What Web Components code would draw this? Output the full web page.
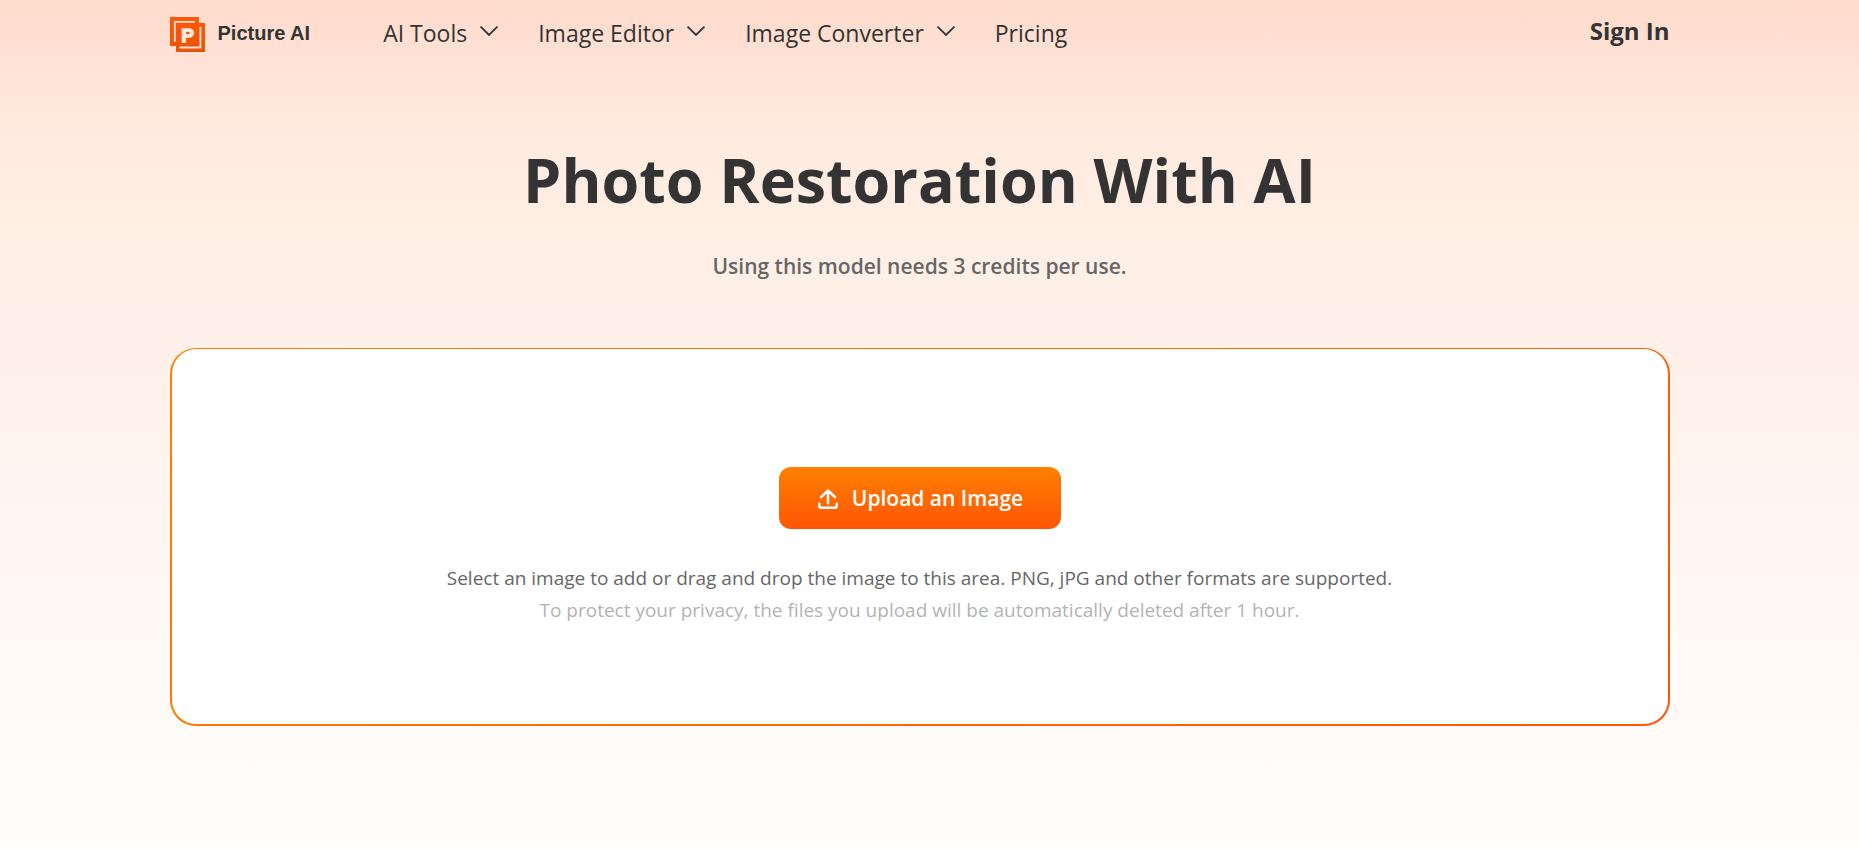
<!DOCTYPE html>
<html lang="en">
<head>
<meta charset="utf-8">
<meta name="viewport" content="width=device-width, initial-scale=1">
<title>Photo Restoration With AI - Picture AI</title>
<style>
  html { min-height: 100%; background: linear-gradient(180deg, #ffdbcb 0, #ffe3d6 68px, #ffebe0 140px, #fff0e7 270px, #fff2ec 410px, #fff8f5 600px, #fffdfc 820px, #fffefd 100%) no-repeat #fffefd; }
  body { margin: 0; font-family: "Open Sans", "Noto Sans", sans-serif; color: #333; }
</style>
</head>
<body>
<picture-app></picture-app>

<template id="app-tpl">
  <style>
    :host { display: block; width: min(1500px, calc(100% - 48px)); margin-left: max(24px, calc((100% - 1520px) / 2)); }
  </style>
  <site-header>
    <nav-item menu>AI Tools</nav-item>
    <nav-item menu>Image Editor</nav-item>
    <nav-item menu>Image Converter</nav-item>
    <nav-item>Pricing</nav-item>
  </site-header>
  <main>
    <page-hero>
      Photo Restoration With AI
      <span slot="note">Using this model needs 3 credits per use.</span>
    </page-hero>
    <upload-card>
      <upload-button>Upload an Image</upload-button>
      <span slot="hint">Select an image to add or drag and drop the image to this area. PNG, jPG and other formats are supported.</span>
      <span slot="privacy">To protect your privacy, the files you upload will be automatically deleted after 1 hour.</span>
    </upload-card>
  </main>
</template>

<template id="header-tpl">
  <style>
    :host { display: block; }
    header { display: flex; align-items: center; min-height: 66px; }
    nav { display: flex; flex-wrap: wrap; gap: 40px; margin-left: 73px; }
    .sign { margin-left: auto; padding-bottom: 4px; color: inherit; text-decoration: none; font-size: 24px; font-weight: 700; line-height: 32px; }
  </style>
  <header>
    <brand-logo>Picture AI</brand-logo>
    <nav aria-label="Main"><slot></slot></nav>
    <a class="sign" href="#signin">Sign In</a>
  </header>
</template>

<template id="brand-tpl">
  <style>
    :host { display: block; }
    a { display: flex; align-items: center; gap: 13px; color: inherit; text-decoration: none; font: 700 20px/32px "Liberation Sans", Arial, sans-serif; }
    svg { display: block; margin-top: 3px; }
  </style>
  <a href="#home">
    <svg width="35" height="35" viewBox="0 0 35 35" aria-hidden="true">
      <defs><linearGradient id="g" x1="0" y1="0" x2="0" y2="1"><stop offset="0" stop-color="#ff5a08"/><stop offset="1" stop-color="#e95308"/></linearGradient></defs>
      <path d="M0 0H29V6H35V35H6V29H0Z" fill="url(#g)"/>
      <path d="M4.8 24.8V4.8H25M9.5 30.5H30.4V10" fill="none" stroke="#ffe1d4" stroke-width="1.8"/>
      <text x="11.2" y="24.8" font-family="Liberation Sans, Arial, sans-serif" font-size="19" font-weight="700" fill="#ffe8dd" stroke="#ffe8dd" stroke-width="1.4">P</text>
    </svg>
    <slot></slot>
  </a>
</template>

<template id="nav-tpl">
  <style>
    :host { display: block; }
    a, button { display: flex; align-items: center; gap: 13px; margin: 0; padding: 0; border: 0; background: none; color: inherit; text-decoration: none; font: inherit; font-size: 23px; line-height: 32px; cursor: pointer; white-space: nowrap; }
    svg { display: block; margin-bottom: 5px; }
  </style>
</template>

<template id="hero-tpl">
  <style>
    :host { display: block; text-align: center; padding: 72px 0 66px; }
    h1 { margin: 0 0 28px; font-size: 61px; line-height: 84px; font-weight: 700; }
    p { margin: 0; font-size: 21px; line-height: 32px; font-weight: 600; color: #666; }
  </style>
  <h1><slot></slot></h1>
  <p><slot name="note"></slot></p>
</template>

<template id="card-tpl">
  <style>
    :host { display: block; }
    section { display: flex; flex-direction: column; align-items: center; padding: 118px 24px 98px; border: 2px solid transparent; border-top-width: 1px; border-radius: 26px; text-align: center;
      background: linear-gradient(#fff, #fff) padding-box, linear-gradient(135deg, #ff8000, #ff5505) border-box; }
    p { margin: 0; font-size: 19px; line-height: 32px; color: #666; }
    .hint { margin-top: 33px; }
    .privacy { color: #b3b3b3; }
  </style>
  <section aria-label="Upload">
    <slot></slot>
    <p class="hint"><slot name="hint"></slot></p>
    <p class="privacy"><slot name="privacy"></slot></p>
  </section>
</template>

<template id="button-tpl">
  <style>
    :host { display: block; }
    button { display: flex; align-items: center; justify-content: center; gap: 14px; min-width: 282px; height: 62px; padding: 0 36px 0 38px; border: 0; border-radius: 12px; background: linear-gradient(180deg, #ff8000, #ff5505); color: #fff; font: inherit; font-size: 21px; font-weight: 600; line-height: 32px; cursor: pointer; }
    svg { display: block; margin-top: 2px; }
  </style>
  <button type="button">
    <svg width="20" height="20" viewBox="0 0 20 20" fill="none" stroke="#fff" stroke-width="2.5" stroke-linecap="round" stroke-linejoin="round" aria-hidden="true">
      <path d="M10 14.2V1.8M3 8.2L10 1.5L17 8.2M1.3 14.8V17.6Q1.3 18.7 2.4 18.7H17.6Q18.7 18.7 18.7 17.6V14.8"/>
    </svg>
    <slot></slot>
  </button>
</template>

<script>
  class TemplateElement extends HTMLElement {
    constructor() {
      super();
      this.attachShadow({ mode: 'open' })
        .append(document.getElementById(this.constructor.template).content.cloneNode(true));
    }
  }
  class BrandLogo extends TemplateElement { static template = 'brand-tpl'; }
  class PageHero extends TemplateElement { static template = 'hero-tpl'; }
  class UploadButton extends TemplateElement { static template = 'button-tpl'; }
  class UploadCard extends TemplateElement { static template = 'card-tpl'; }
  class SiteHeader extends TemplateElement { static template = 'header-tpl'; }
  class PictureApp extends TemplateElement { static template = 'app-tpl'; }

  // A plain link, or a menu button with a chevron when the "menu" attribute is set.
  class NavItem extends TemplateElement {
    static template = 'nav-tpl';
    connectedCallback() {
      if (this.ready) return;
      this.ready = true;
      const menu = this.hasAttribute('menu');
      const control = document.createElement(menu ? 'button' : 'a');
      if (menu) {
        control.type = 'button';
        control.setAttribute('aria-haspopup', 'true');
      } else {
        control.href = '#pricing';
      }
      control.innerHTML = '<slot></slot>' + (menu
        ? '<svg width="18" height="10" viewBox="0 0 18 10" fill="none" stroke="#333" stroke-width="1.8" aria-hidden="true"><path d="M.5 .6L9 9L17.5 .6"/></svg>'
        : '');
      this.shadowRoot.append(control);
    }
  }

  customElements.define('brand-logo', BrandLogo);
  customElements.define('nav-item', NavItem);
  customElements.define('page-hero', PageHero);
  customElements.define('upload-button', UploadButton);
  customElements.define('upload-card', UploadCard);
  customElements.define('site-header', SiteHeader);
  customElements.define('picture-app', PictureApp);
</script>
</body>
</html>
